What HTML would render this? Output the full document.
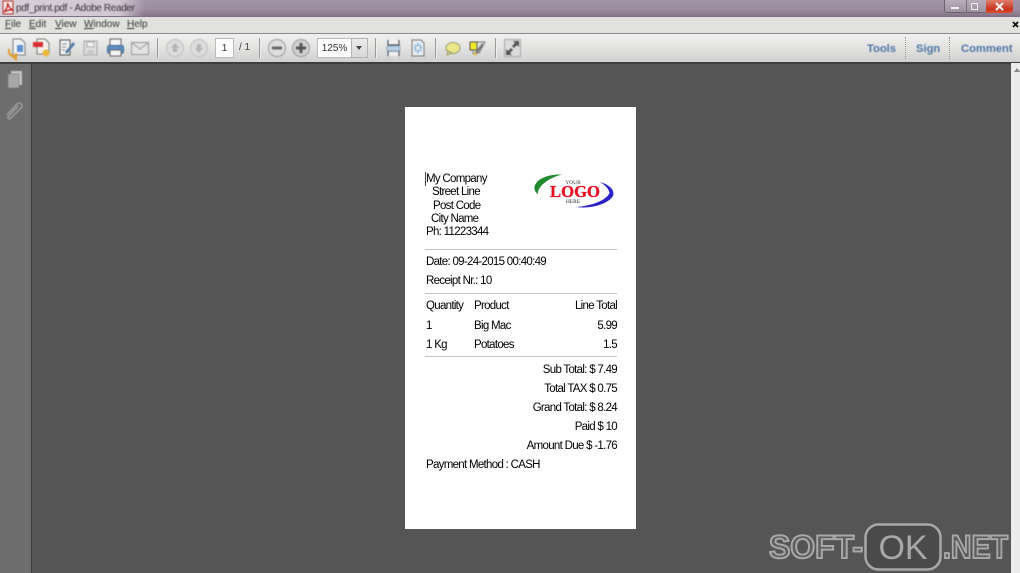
<!DOCTYPE html>
<html><head><meta charset="utf-8"><style>
html,body{margin:0;padding:0;width:1020px;height:573px;overflow:hidden;background:#555}
*{box-sizing:border-box}
.a{position:absolute;white-space:nowrap}
body{font-family:"Liberation Sans",sans-serif;position:relative}
.t{position:absolute;white-space:nowrap;font-size:11.5px;line-height:14px;color:#000;letter-spacing:-.7px;filter:blur(.35px)}
.r{text-align:right}
.hr{position:absolute;left:425px;width:192px;height:1px;background:#c4c4c4}
.m{position:absolute;top:18px;font-size:10px;line-height:14px;color:#333;filter:blur(.4px)}
.m u{text-decoration:underline}
.sep{position:absolute;top:38px;width:1px;height:20px;background:#9b9b9b;box-shadow:1px 0 0 #eee;filter:blur(.3px)}
.lnk{position:absolute;top:42px;font-size:11.2px;font-weight:bold;line-height:14px;color:#4f76a5;filter:blur(.4px)}
</style></head><body>
<div class="a" style="left:0;top:0;width:1020px;height:17px;background:linear-gradient(#a494a8 0,#9c8ca0 55%,#8c7a8e 85%,#7d6c80 100%)"></div>
<div class="a" style="left:0;top:0;width:145px;height:16px;background:linear-gradient(90deg,#d8d0d8 0,#cfc6cf 82%,rgba(200,190,200,0) 100%)"></div>
<svg class="a" style="left:1px;top:0;filter:blur(.4px)" width="14" height="16" viewBox="0 0 14 16"><rect x="2" y="1" width="10" height="13" fill="#f4e8e8" stroke="#b03030"/><path d="M3 12C6 9 7 5 6.500 3C8 7 9 9 12 10C9 9.500 6 10.500 3 12Z" fill="none" stroke="#c01818" stroke-width="1.200"/></svg>
<div class="a" style="left:16px;top:2px;font-size:10px;letter-spacing:-.35px;line-height:14px;color:#3b3038;filter:blur(.4px)">pdf_print.pdf - Adobe Reader</div>

<div class="a" style="left:944px;top:0;width:69px;height:13px;background:linear-gradient(#b9adbb,#9e90a0);border:1px solid #6f6270;border-top:0;border-radius:0 0 3px 3px"></div>
<div class="a" style="left:986px;top:0;width:27px;height:13px;background:linear-gradient(#e0806c,#c8341e 70%,#d85030);border-radius:0 0 3px 0;filter:blur(.3px)"></div>
<div class="a" style="left:966px;top:0;width:1px;height:13px;background:#7c6f7e"></div>
<div class="a" style="left:951px;top:7px;width:8px;height:2px;background:#eee"></div>
<div class="a" style="left:971px;top:3px;width:7px;height:7px;border:1px solid #eee"></div>
<svg class="a" style="left:994px;top:2px" width="11" height="9"><path d="M2 1L9 8M9 1L2 8" stroke="#f6f0ee" stroke-width="2.200"/></svg>

<div class="a" style="left:0;top:17px;width:1020px;height:16px;background:#e1e2df"></div>
<div class="m" style="left:5px"><u>F</u>ile</div>
<div class="m" style="left:29px"><u>E</u>dit</div>
<div class="m" style="left:55px"><u>V</u>iew</div>
<div class="m" style="left:84px"><u>W</u>indow</div>
<div class="m" style="left:127px"><u>H</u>elp</div>
<svg class="a" style="left:1012px;top:21px" width="7" height="7"><path d="M1 1L6 6M6 1L1 6" stroke="#111" stroke-width="1.800"/></svg>

<div class="a" style="left:0;top:33px;width:1020px;height:1px;background:#8b8b8b"></div>
<div class="a" style="left:0;top:34px;width:1020px;height:28px;background:linear-gradient(#f0f0ef,#e6e6e5 40%,#d0d0cf 100%)"></div>
<div class="a" style="left:0;top:62px;width:1020px;height:2px;background:#3e3e3e"></div>

<svg class="a" style="left:0;top:34px;filter:blur(.5px)" width="530" height="28" viewBox="0 0 530 28" fill="none">
<!-- open -->
<path d="M13 5H21L25 9V21H13Z" fill="#eef2f6" stroke="#7d7d7d"/><path d="M17 11H23V18H17Z" fill="#5b92cf"/><path d="M9 15V18C9 21 12 22 16 22M16 19V25L12 22" stroke="#e0a030" stroke-width="2.200"/>
<!-- create -->
<path d="M37 5H45L49 9V20H37Z" fill="#f4f1ea" stroke="#7a7a7a"/><rect x="33" y="8" width="10" height="5" fill="#d83030"/><circle cx="46" cy="19" r="3.500" fill="#e9b93a"/>
<!-- edit -->
<path d="M60 6H70V21H60Z" fill="#f2f2f2" stroke="#555"/><path d="M62 10H67M62 13H66M62 16H65" stroke="#888"/><path d="M66 19L74 9" stroke="#5a7fa5" stroke-width="3"/>
<!-- save -->
<path d="M84 7H97V21H84Z" fill="#dedede" stroke="#a8a8a8"/><rect x="87" y="8" width="7" height="5" fill="#f0f0f0" stroke="#b0b0b0"/><rect x="87" y="16" width="7" height="5" fill="#c8c8c8"/>
<!-- print -->
<rect x="110" y="5" width="11" height="7" fill="#f5f5f5" stroke="#666"/><rect x="107.500" y="11.500" width="16" height="8" rx="2" fill="#5c8ec0" stroke="#3f6a95"/><rect x="110" y="16" width="11" height="6" fill="#f5f5f5" stroke="#666"/>
<!-- mail -->
<rect x="131.500" y="8.500" width="17" height="12" fill="#e3e3e3" stroke="#9a9a9a"/><path d="M132 9L140 15L148 9" stroke="#a0a0a0"/>
<!-- nav -->
<circle cx="175" cy="14" r="8.500" fill="#dcdcdc" stroke="#c2c2c2"/><path d="M175 9L179 14H177V18H173V14H171Z" fill="#b5b5b5"/>
<circle cx="199" cy="14" r="8.500" fill="#dcdcdc" stroke="#c2c2c2"/><path d="M199 19L195 14H197V10H201V14H203Z" fill="#b5b5b5"/>
<!-- zoom -->
<circle cx="277" cy="14" r="8.500" fill="#dedede" stroke="#9a9a9a"/><rect x="272" y="12.500" width="10" height="3" fill="#666"/>
<circle cx="301" cy="14" r="8.500" fill="#d0d0d0" stroke="#9a9a9a"/><path d="M296 12.500H299.500V9H302.500V12.500H306V15.500H302.500V19H299.500V15.500H296Z" fill="#555"/>
<!-- fit page -->
<path d="M388 6V11H399V6M388 22V17H399V22" fill="#f0f0f0" stroke="#555" stroke-width="1.200"/><rect x="387" y="12" width="13" height="5" fill="#bcd0e4" stroke="#6a8cad" stroke-width=".6"/>
<path d="M412 6H421L424 9V22H412Z" fill="#e7edf3" stroke="#777"/><path d="M418 9V12M418 16V19M414 14H416M420 14H422M415 11L416.500 12.500M421 11L419.500 12.500M415 17L416.500 15.500M421 17L419.500 15.500" stroke="#5f92c4" stroke-width="1.200"/>
<!-- comment -->
<ellipse cx="453" cy="14" rx="7" ry="5.500" fill="#ebe78c" stroke="#9a9a66"/><path d="M448 17L447 21L452 19Z" fill="#ebe78c" stroke="#9a9a66"/>
<path d="M476 8H485L479 19H473V16" fill="#e8e8e8" stroke="#777"/><rect x="470" y="8" width="7" height="8" fill="#f2e928" stroke="#555"/><path d="M476 19L483 10" stroke="#777" stroke-width="2.500"/><circle cx="475" cy="20" r="1.500" fill="#d8c030"/>
<!-- fullscreen -->
<rect x="504.500" y="5.500" width="16" height="17" fill="#dcdcdc" stroke="#aaa"/><path d="M513 7H519V13L517 11L514 14L512 12L515 9ZM506 21V15L508 17L511 14L513 16L510 19L512 21Z" fill="#555"/>
</svg>

<div class="sep" style="left:157px"></div>
<div class="sep" style="left:259px"></div>
<div class="sep" style="left:375px"></div>
<div class="sep" style="left:435px"></div>
<div class="sep" style="left:495px"></div>

<div class="a" style="left:215px;top:38px;width:19px;height:20px;background:#fdfdfd;border:1px solid #bbb;font-size:10px;line-height:19px;text-align:center;color:#333;">1</div>
<div class="a" style="left:239px;top:41px;font-size:10px;line-height:14px;color:#444;filter:blur(.3px)">/ 1</div>
<div class="a" style="left:317px;top:38px;width:34px;height:20px;background:#fdfdfd;border:1px solid #bbb;border-right:0;font-size:10px;line-height:19px;text-align:center;color:#333">125%</div>
<div class="a" style="left:351px;top:38px;width:17px;height:20px;background:linear-gradient(#ececec,#d8d8d8);border:1px solid #b4b4b4"></div>
<div class="a" style="left:356px;top:46px;width:0;height:0;border:3.500px solid transparent;border-top:4px solid #444;border-bottom:0"></div>

<div class="lnk" style="left:867px">Tools</div>
<div class="lnk" style="left:916px">Sign</div>
<div class="lnk" style="left:961px">Comment</div>
<div class="a" style="left:905px;top:37px;height:22px;border-left:1px dotted #999"></div>
<div class="a" style="left:949px;top:37px;height:22px;border-left:1px dotted #999"></div>

<div class="a" style="left:0;top:64px;width:31px;height:509px;background:#6d6d6d"></div>
<div class="a" style="left:31px;top:64px;width:1px;height:509px;background:#3c3c3c"></div>
<div class="a" style="left:1011px;top:63px;width:9px;height:510px;background:#ececec"></div>
<div class="a" style="left:1014px;top:68px;width:0;height:0;border:3px solid transparent;border-bottom:4px solid #888;border-top:0"></div>
<svg class="a" style="left:4px;top:68px;filter:blur(.5px)" width="24" height="56" fill="none">
<rect x="7" y="3" width="11" height="14" fill="#c4c4c4"/><rect x="4" y="6" width="11" height="14" fill="#a8a8a8" stroke="#777" stroke-width=".6"/>
<path d="M3 47L13 36C16 33 20 37 17 40L7 50C5 52 3 50 5 48L14 38" stroke="#a0a0a0" stroke-width="1.500"/>
</svg>

<div class="a" style="left:405px;top:107px;width:231px;height:422px;background:#fff"></div>
<div class="a" style="left:425px;top:172px;width:1px;height:14px;background:#444"></div>
<div class="t" style="left:426px;top:172px">My Company</div>
<div class="t" style="left:432px;top:185px">Street Line</div>
<div class="t" style="left:433px;top:199px">Post Code</div>
<div class="t" style="left:431px;top:212px">City Name</div>
<div class="t" style="left:426px;top:225px">Ph: 11223344</div>

<svg class="a" style="left:530px;top:168px;filter:blur(.3px)" width="90" height="44" viewBox="0 0 90 44" fill="none">
<path d="M32 6.500C18 6 4 11 4.500 21C5 23 6 25 8 26C7 19 18 10 32 6.500Z" fill="#1f8a2e"/>
<path d="M70 14C80 17 85 22 83 28C78 36 62 41 46 39C60 38 76 33 79.500 25C79 21 75 17 70 14Z" fill="#2a24c8"/>
<text x="20" y="29" textLength="50" lengthAdjust="spacingAndGlyphs" font-family="Liberation Serif" font-weight="bold" font-size="16.500" fill="#ee0a20" stroke="#ee0a20" stroke-width=".3">LOGO</text>
<text x="43" y="16" text-anchor="middle" font-family="Liberation Serif" font-size="5.500" fill="#333">YOUR</text>
<text x="43" y="35" text-anchor="middle" font-family="Liberation Serif" font-size="5.500" fill="#333">HERE</text>
</svg>

<div class="hr" style="top:249px"></div>
<div class="t" style="left:426px;top:255px">Date: 09-24-2015 00:40:49</div>
<div class="t" style="left:426px;top:274px">Receipt Nr.: 10</div>
<div class="hr" style="top:293px"></div>
<div class="t" style="left:426px;top:299px">Quantity</div>
<div class="t" style="left:474px;top:299px">Product</div>
<div class="t r" style="right:403px;top:299px">Line Total</div>
<div class="t" style="left:426px;top:319px">1</div>
<div class="t" style="left:474px;top:319px">Big Mac</div>
<div class="t r" style="right:403px;top:319px">5.99</div>
<div class="t" style="left:426px;top:338px">1 Kg</div>
<div class="t" style="left:474px;top:338px">Potatoes</div>
<div class="t r" style="right:403px;top:338px">1.5</div>
<div class="hr" style="top:356px"></div>
<div class="t r" style="right:403px;top:363px">Sub Total: $ 7.49</div>
<div class="t r" style="right:403px;top:382px">Total TAX $ 0.75</div>
<div class="t r" style="right:403px;top:401px">Grand Total: $ 8.24</div>
<div class="t r" style="right:403px;top:420px">Paid $ 10</div>
<div class="t r" style="right:403px;top:439px">Amount Due $ -1.76</div>
<div class="t" style="left:426px;top:458px">Payment Method : CASH</div>

<svg class="a" style="left:760px;top:514px" width="260" height="59">
<g font-family="Liberation Sans" font-size="32" font-weight="bold" fill="#5e5e5e" stroke="#a8a8a8" stroke-width="2">
<text x="9" y="44" textLength="94" lengthAdjust="spacingAndGlyphs">SOFT-</text>
<text x="183" y="44" textLength="65" lengthAdjust="spacingAndGlyphs">.NET</text>
</g>
<rect x="105.500" y="10.500" width="75" height="45" rx="13" fill="#4a4a4a" stroke="#a8a8a8" stroke-width="2.500"/>
<text x="143" y="45" text-anchor="middle" font-family="Liberation Sans" font-size="34" fill="#a8a8a8">OK</text>
</svg>
</body></html>
